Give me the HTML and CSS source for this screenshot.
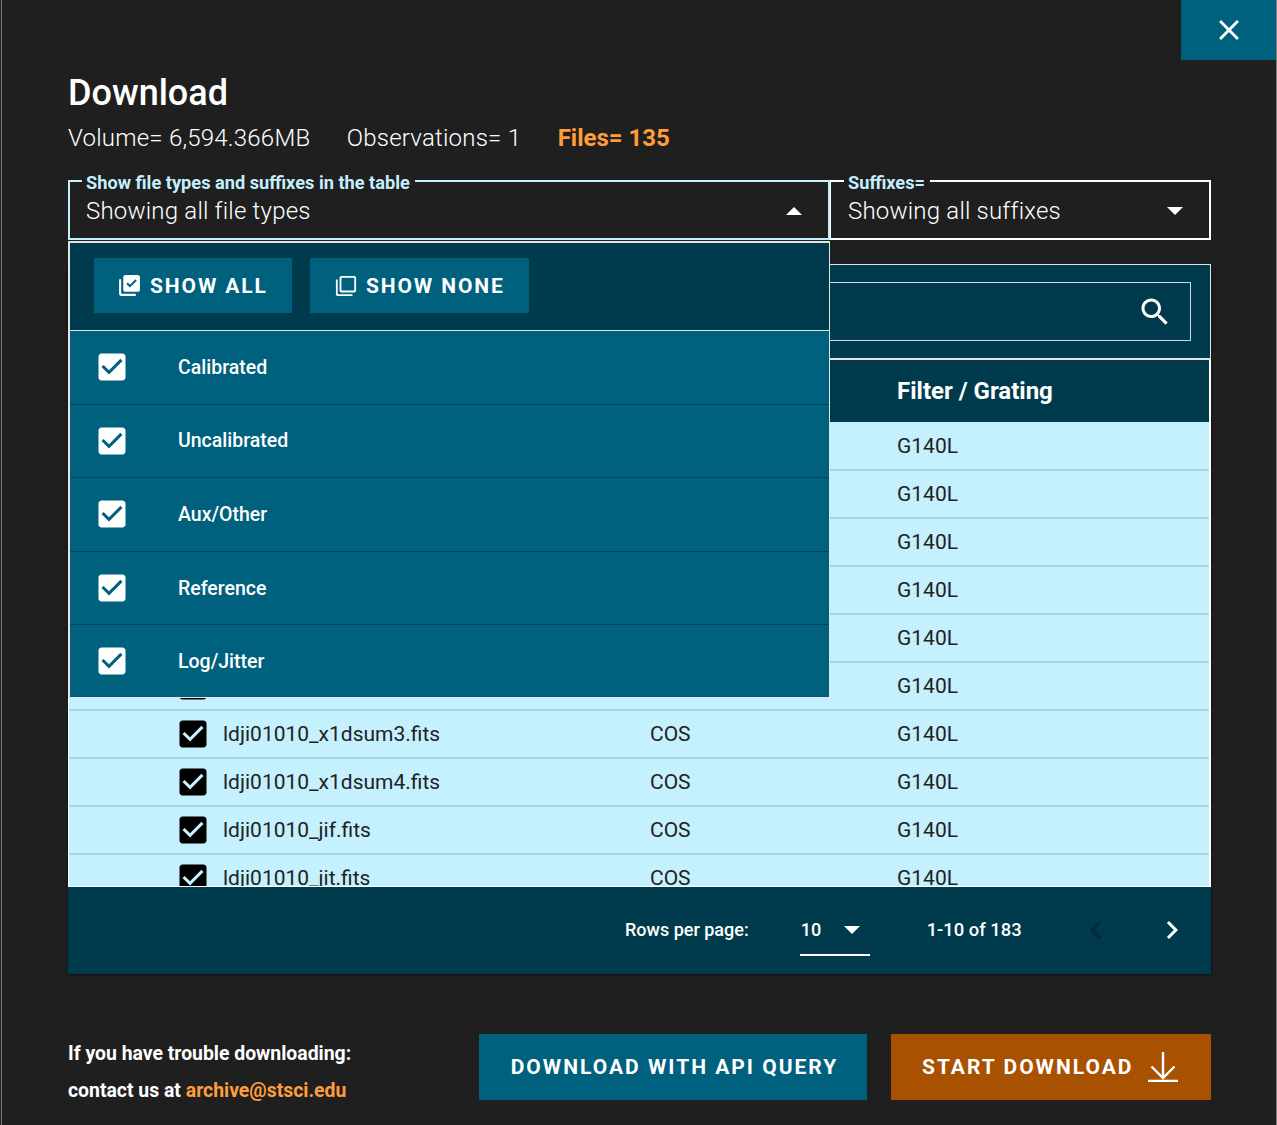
FILE: index.html
```html
<!DOCTYPE html>
<html lang="en">
<head>
    <meta charset="UTF-8">
    <title>Download</title>
    <link rel="stylesheet" href="styles.css">
</head>
<body>
    <svg class="defs" width="0" height="0">
        <symbol id="check" viewBox="0 0 24 24"><path d="M19 3H5c-1.11 0-2 .9-2 2v14c0 1.1.89 2 2 2h14c1.11 0 2-.9 2-2V5c0-1.1-.89-2-2-2zm-9 14l-5-5 1.41-1.41L10 14.17l7.59-7.59L19 8l-9 9z"/></symbol>
    </svg>
    <div class="dialog">
        <button class="close">
            <svg viewBox="0 0 24 24"><path d="M19 6.41L17.59 5 12 10.59 6.41 5 5 6.41 10.59 12 5 17.59 6.41 19 12 13.41 17.59 19 19 17.59 13.41 12z"/></svg>
        </button>

        <h1>Download</h1>
        <div class="stats">
            <span>Volume= 6,594.366MB</span>
            <span>Observations= 1</span>
            <span class="files">Files= 135</span>
        </div>

        <div class="filters">
            <div class="filter-types">
                <fieldset class="select open">
                    <legend>Show file types and suffixes in the table</legend>
                    <span>Showing all file types</span>
                    <i class="caret up"></i>
                </fieldset>
                <div class="menu">
                    <div class="menu-actions">
                        <button class="action show-all">
                            <svg viewBox="0 0 24 24"><path d="M4 6H2v14c0 1.1.9 2 2 2h14v-2H4V6zm16-4H8c-1.1 0-2 .9-2 2v12c0 1.1.9 2 2 2h12c1.1 0 2-.9 2-2V4c0-1.1-.9-2-2-2zm-7.53 12L9 10.5l1.4-1.4 2.07 2.07L17.6 6 19 7.41 12.47 14z"/></svg>
                            SHOW ALL
                        </button>
                        <button class="action show-none">
                            <svg viewBox="0 0 24 24"><path d="M3 5H1v16c0 1.1.9 2 2 2h16v-2H3V5zm18-4H7c-1.1 0-2 .9-2 2v14c0 1.1.9 2 2 2h14c1.1 0 2-.9 2-2V3c0-1.1-.9-2-2-2zm0 16H7V3h14v14z"/></svg>
                            SHOW NONE
                        </button>
                    </div>
                    <div class="menu-item"><svg class="box"><use href="#check"/></svg>Calibrated</div>
                    <div class="menu-item"><svg class="box"><use href="#check"/></svg>Uncalibrated</div>
                    <div class="menu-item"><svg class="box"><use href="#check"/></svg>Aux/Other</div>
                    <div class="menu-item"><svg class="box"><use href="#check"/></svg>Reference</div>
                    <div class="menu-item"><svg class="box"><use href="#check"/></svg>Log/Jitter</div>
                </div>
            </div>
            <fieldset class="select suffixes">
                <legend>Suffixes=</legend>
                <span>Showing all suffixes</span>
                <i class="caret"></i>
            </fieldset>
        </div>

        <div class="panel">
            <div class="toolbar">
                <div class="search">
                    <svg viewBox="0 0 24 24"><path d="M15.5 14h-.79l-.28-.27C15.41 12.59 16 11.11 16 9.5 16 5.91 13.09 3 9.5 3S3 5.91 3 9.5 5.91 16 9.5 16c1.61 0 3.09-.59 4.23-1.57l.27.28v.79l5 4.99L20.49 19l-4.99-5zm-6 0C7.01 14 5 11.99 5 9.5S7.01 5 9.5 5 14 7.01 14 9.5 11.99 14 9.5 14z"/></svg>
                </div>
            </div>
            <div class="table-wrap">
                <div class="row head">
                    <div></div>
                    <div>File name</div>
                    <div>Instrument</div>
                    <div>Filter / Grating</div>
                </div>
                <div class="row"><svg class="box"><use href="#check"/></svg><div>ldji01010_asn.fits</div><div>COS</div><div>G140L</div></div>
                <div class="row"><svg class="box"><use href="#check"/></svg><div>ldji01010_trl.fits</div><div>COS</div><div>G140L</div></div>
                <div class="row"><svg class="box"><use href="#check"/></svg><div>ldji01010_spt.fits</div><div>COS</div><div>G140L</div></div>
                <div class="row"><svg class="box"><use href="#check"/></svg><div>ldji01010_x1dsum.fits</div><div>COS</div><div>G140L</div></div>
                <div class="row"><svg class="box"><use href="#check"/></svg><div>ldji01010_x1dsum1.fits</div><div>COS</div><div>G140L</div></div>
                <div class="row"><svg class="box"><use href="#check"/></svg><div>ldji01010_x1dsum2.fits</div><div>COS</div><div>G140L</div></div>
                <div class="row"><svg class="box"><use href="#check"/></svg><div>ldji01010_x1dsum3.fits</div><div>COS</div><div>G140L</div></div>
                <div class="row"><svg class="box"><use href="#check"/></svg><div>ldji01010_x1dsum4.fits</div><div>COS</div><div>G140L</div></div>
                <div class="row"><svg class="box"><use href="#check"/></svg><div>ldji01010_jif.fits</div><div>COS</div><div>G140L</div></div>
                <div class="row"><svg class="box"><use href="#check"/></svg><div>ldji01010_jit.fits</div><div>COS</div><div>G140L</div></div>
            </div>
            <div class="pager">
                <span class="rows-label">Rows per page:</span>
                <span class="rows-select">10<i class="caret small"></i></span>
                <span class="range">1-10 of 183</span>
                <svg class="prev" viewBox="0 0 24 24"><path d="M15.41 7.41L14 6l-6 6 6 6 1.41-1.41L10.83 12z"/></svg>
                <svg class="next" viewBox="0 0 24 24"><path d="M10 6L8.59 7.41 13.17 12l-4.58 4.59L10 18l6-6z"/></svg>
            </div>
        </div>

        <div class="footer">
            <div class="help">
                <p>If you have trouble downloading:</p>
                <p>contact us at <a href="#">archive@stsci.edu</a></p>
            </div>
            <button class="big api">DOWNLOAD WITH API QUERY</button>
            <button class="big start">
                START DOWNLOAD
                <svg viewBox="0 0 30 30" fill="none" stroke="#fff" stroke-width="2.4"><path d="M15 0v26M3.500 14.500L15 26l11.500-11.500M0 29h30"/></svg>
            </button>
        </div>
    </div>
</body>
</html>
```

FILE: styles.css
```css
* {
    box-sizing: border-box;
}
html, body {
    margin: 0;
    height: 1125px;
    overflow: hidden;
    background: #1f1f1f;
    font-family: Roboto, sans-serif;
    color: #fff;
}
.defs {
    position: absolute;
}
.dialog {
    position: relative;
    height: 1125px;
    margin-left: 1px;
    padding: 71px 65px 0 66px;
    background: #1f1f1f;
    border: solid #7d7d7d;
    border-width: 0 1px;
}
button {
    font-family: inherit;
    border: none;
    color: #fff;
    cursor: pointer;
}
svg {
    fill: currentColor;
    flex: none;
}
.close {
    position: absolute;
    top: 0;
    right: 0;
    width: 95px;
    height: 60px;
    padding: 0;
    background: #00617f;
}
.close svg {
    display: block;
    width: 34px;
    height: 34px;
    margin: 0 auto;
}
h1 {
    margin: 0;
    font-size: 36px;
    line-height: 44px;
    font-weight: 500;
}
.stats {
    display: flex;
    gap: 36.500px;
    margin-top: 3px;
    font-size: 24px;
    line-height: 40px;
    font-weight: 300;
    letter-spacing: 0.22px;
}
.files {
    font-weight: 700;
    letter-spacing: 0;
    color: #ff9d3b;
}

.filters {
    display: flex;
    margin-top: 10px;
}
.filter-types {
    position: relative;
    width: 762px;
}
.select {
    display: flex;
    align-items: center;
    position: relative;
    height: 72px;
    margin: 0;
    padding: 0 16px 10px 16px;
    border: 2px solid #fff;
    font-size: 24px;
    font-weight: 300;
    letter-spacing: 0.2px;
}
.select legend {
    padding: 4px 5px 0 4px;
    margin-left: -4px;
    font-size: 18.200px;
    line-height: 22px;
    font-weight: 700;
    letter-spacing: 0;
    color: #c3effe;
}
.select span {
    flex: 1;
}
.open {
    border-color: #c3effe;
}
.suffixes {
    flex: 1;
    padding-left: 17px;
    border-left-width: 1px;
}
.caret {
    display: block;
    width: 0;
    height: 0;
    margin-right: 10px;
    border-left: 8px solid transparent;
    border-right: 8px solid transparent;
    border-top: 8px solid #fff;
}
.caret.up {
    border-top: none;
    border-bottom: 8px solid #fff;
}

.menu {
    position: absolute;
    z-index: 2;
    top: 73px;
    left: 0;
    width: 762px;
    height: 457px;
    border: 1px solid #e4e4e4;
    border-width: 2px 1px 1px 2px;
    background: #00617f;
}
.menu-actions {
    display: flex;
    align-items: center;
    gap: 18px;
    height: 88px;
    padding: 0 24px 2px;
    background: #003b4d;
    border-bottom: 1px solid #e4e4e4;
}
.action {
    display: flex;
    align-items: center;
    gap: 8px;
    height: 55px;
    padding: 0 24px 0 23px;
    background: #00617f;
    font-size: 21px;
    font-weight: 700;
    letter-spacing: 1.9px;
}
.show-all svg {
    width: 25px;
    height: 25px;
}
.show-none {
    gap: 9px;
    padding-left: 25px;
}
.show-none svg {
    width: 22px;
    height: 22px;
}
.menu-item {
    display: flex;
    align-items: center;
    height: 73.600px;
    font-size: 19.500px;
    font-weight: 500;
    border-bottom: 1px solid #00455b;
}
.menu-item:last-child {
    height: 71.600px;
    border-bottom: none;
}
.menu-item .box {
    width: 36px;
    height: 36px;
    margin: 0 48px 0 24px;
    color: #fff;
}

.panel {
    margin-top: 24px;
    box-shadow: 0 1px 3px rgba(0, 0, 0, 0.5);
}
.toolbar {
    height: 96px;
    padding: 17px 19px 0 0;
    background: #003b4d;
    border: 1px solid #e4e4e4;
    border-bottom-width: 2px;
}
.search {
    display: flex;
    align-items: center;
    justify-content: flex-end;
    height: 59px;
    padding-right: 17px;
    border: 1px solid #d0d8da;
}
.search svg {
    width: 36px;
    height: 36px;
}
.table-wrap {
    height: 527px;
    overflow: hidden;
    background: #c5f0fd;
    border: solid #fff;
    border-width: 0 2px 1px 1px;
}
.row {
    display: grid;
    grid-template-columns: 154px 427px 247px 1fr;
    align-items: center;
    height: 48px;
    font-size: 21px;
    font-weight: 400;
    color: #222;
    border-bottom: 1px solid #a8ced9;
    box-shadow: 0 1px 0 #b0d8e5;
}
.row .box {
    width: 36px;
    height: 36px;
    margin-left: 106px;
    color: #000;
}
.row.head {
    height: 62px;
    background: #003b4d;
    color: #fff;
    font-size: 24px;
    font-weight: 700;
    border-bottom: none;
    box-shadow: none;
}
.pager {
    display: flex;
    align-items: center;
    height: 87px;
    padding-bottom: 2px;
    background: #003b4d;
    font-size: 18px;
    font-weight: 500;
}
.rows-label {
    margin-left: 557px;
}
.rows-select {
    display: flex;
    align-items: center;
    gap: 23px;
    width: 70px;
    height: 51px;
    margin: 1px 0 0 51px;
    padding: 1px 0 0 1px;
    border-bottom: 2px solid #fff;
}
.caret.small {
    margin: 0;
}
.range {
    margin-left: 57px;
    font-size: 18.400px;
}
.prev, .next {
    width: 36px;
    height: 36px;
}
.prev {
    margin-left: 56px;
    color: #00283a;
}
.next {
    margin-left: 40px;
}

.footer {
    display: flex;
    align-items: flex-start;
    margin-top: 60px;
}
.help {
    margin-right: auto;
    padding-top: 2px;
    font-size: 19.400px;
    font-weight: 700;
}
.help p {
    margin: 0;
    line-height: 36.500px;
}
.help a {
    color: #ff9d3b;
    text-decoration: none;
}
.big {
    display: flex;
    align-items: center;
    justify-content: center;
    height: 66px;
    font-size: 21px;
    font-weight: 700;
    letter-spacing: 2px;
}
.api {
    width: 388px;
    padding-left: 9px;
    background: #00617f;
}
.start {
    justify-content: flex-start;
    gap: 14px;
    width: 320px;
    margin-left: 24px;
    padding-left: 31px;
    background: #a85100;
}
.start svg {
    width: 30px;
    height: 30px;
    fill: none;
}
```
